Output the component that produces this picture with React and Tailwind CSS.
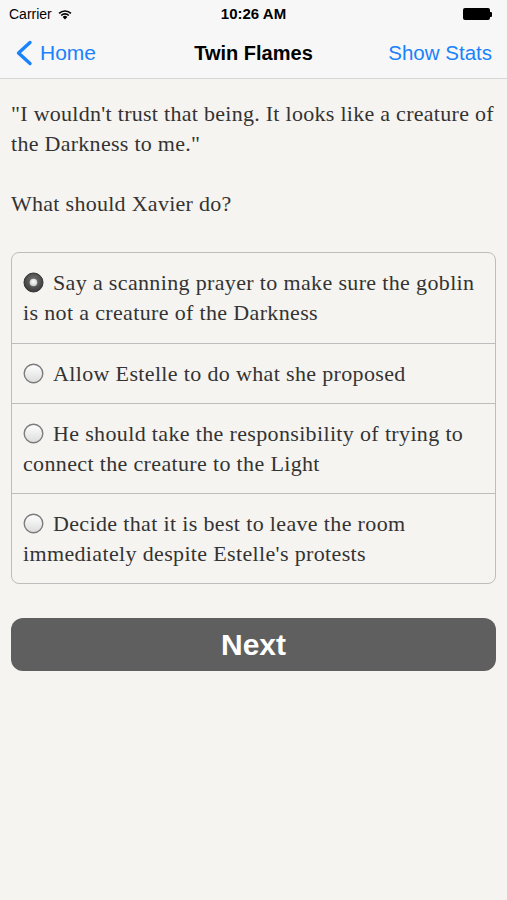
import React from "react";

const serif = { fontFamily: '"Liberation Serif", "DejaVu Serif", serif', letterSpacing: "0.35px" };

function Radio({ selected }) {
  if (selected) {
    return (
      <svg width="21" height="21" viewBox="0 0 21 21" className="inline-block align-[-3px] mr-[9px]">
        <defs>
          <radialGradient id="sel" cx="50%" cy="40%" r="60%">
            <stop offset="0%" stopColor="#777" />
            <stop offset="100%" stopColor="#3a3a3a" />
          </radialGradient>
          <radialGradient id="selc" cx="50%" cy="40%" r="60%">
            <stop offset="0%" stopColor="#ffffff" />
            <stop offset="100%" stopColor="#c8c8c8" />
          </radialGradient>
        </defs>
        <circle cx="10.5" cy="10.5" r="9.5" fill="url(#sel)" stroke="#333" strokeWidth="1" />
        <circle cx="10.5" cy="10.5" r="3.8" fill="url(#selc)" />
      </svg>
    );
  }
  return (
    <svg width="21" height="21" viewBox="0 0 21 21" className="inline-block align-[-3px] mr-[9px]">
      <defs>
        <linearGradient id="uns" x1="0" y1="0" x2="0" y2="1">
          <stop offset="0%" stopColor="#ffffff" />
          <stop offset="100%" stopColor="#dcdcdc" />
        </linearGradient>
      </defs>
      <circle cx="10.5" cy="10.5" r="9.3" fill="url(#uns)" stroke="#7c7c7c" strokeWidth="1.4" />
    </svg>
  );
}

const options = [
  "Say a scanning prayer to make sure the goblin is not a creature of the Darkness",
  "Allow Estelle to do what she proposed",
  "He should take the responsibility of trying to connect the creature to the Light",
  "Decide that it is best to leave the room immediately despite Estelle's protests",
];

export default function App() {
  return (
    <div className="w-[507px] h-[900px] bg-[#f6f4f0] flex flex-col overflow-hidden" style={{ fontFamily: '"Liberation Sans", Arial, sans-serif' }}>
      <div className="bg-[#f7f7f7] border-b border-[#d6d6d6]">
        <div className="h-[28px] flex items-center justify-between px-[9px] relative">
          <div className="flex items-center gap-[5px] text-[14px] text-black">
            <span>Carrier</span>
            <svg width="16" height="12" viewBox="0 0 16 12">
              <path d="M8 11.5 L5.6 8.9 A3.4 3.4 0 0 1 10.4 8.9 Z" fill="#000" />
              <path d="M3.6 6.9 A6.3 6.3 0 0 1 12.4 6.9 L11.2 8.1 A4.6 4.6 0 0 0 4.8 8.1 Z" fill="#000" />
              <path d="M1.5 4.8 A9.3 9.3 0 0 1 14.5 4.8 L13.3 6 A7.6 7.6 0 0 0 2.7 6 Z" fill="#000" />
            </svg>
          </div>
          <div className="absolute left-1/2 -translate-x-1/2 text-[15px] font-bold text-black">10:26 AM</div>
          <div className="flex items-center mr-[6px]">
            <div className="w-[27px] h-[12px] bg-black rounded-[2px]" />
            <div className="w-[2px] h-[5px] bg-black rounded-r-[1px]" />
          </div>
        </div>
        <div className="h-[50px] flex items-center justify-between pl-[15px] pr-[14px] relative">
          <div className="flex items-center gap-[7px] text-[#1a82fb] text-[21px]">
            <svg width="18" height="26" viewBox="0 0 18 26">
              <path d="M15 2.5 L3.5 13 L15 23.5" fill="none" stroke="#1a82fb" strokeWidth="3.4" strokeLinecap="round" strokeLinejoin="round" />
            </svg>
            <span>Home</span>
          </div>
          <div className="absolute left-1/2 -translate-x-1/2 text-[20px] font-bold text-black">Twin Flames</div>
          <div className="text-[#1a82fb] text-[20.5px] pr-[1px]">Show Stats</div>
        </div>
      </div>

      <div className="pl-[11px] pr-[2px] pt-[20px] text-[#333] text-[22px] leading-[30px]" style={{ ...serif, letterSpacing: "0.28px" }}>
        <p>"I wouldn't trust that being. It looks like a creature of the Darkness to me."</p>
        <p className="mt-[30px]">What should Xavier do?</p>
      </div>

      <div className="mx-[11px] mt-[33px] border border-[#bdbdbd] rounded-[8px] overflow-hidden" style={serif}>
        {options.map((o, i) => (
          <div key={i} className={`px-[11px] pt-[15px] text-[22px] leading-[30px] text-[#333] ${i > 0 ? "border-t border-[#bdbdbd] pb-[14px]" : "pb-[15px]"}`}>
            <Radio selected={i === 0} />
            {o}
          </div>
        ))}
      </div>

      <div className="mx-[11px] mt-[34px] h-[53px] rounded-[12px] bg-[#5f5f5f] flex items-center justify-center text-white text-[30px] font-bold">
        Next
      </div>
    </div>
  );
}
